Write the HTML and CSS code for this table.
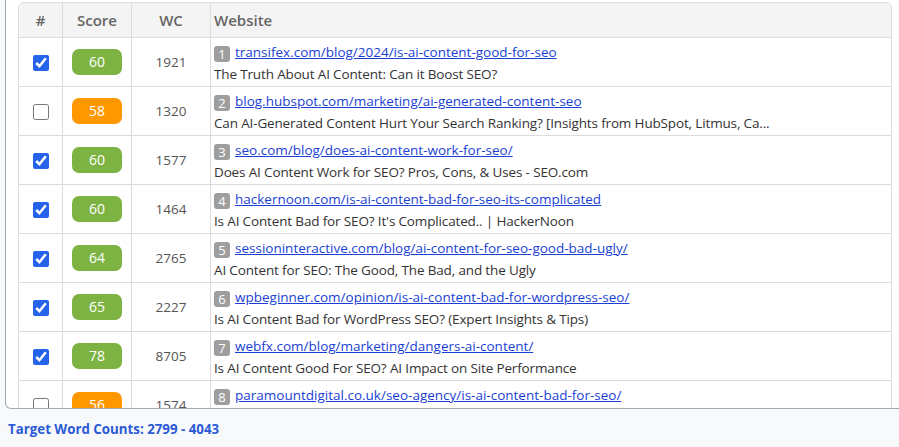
FILE: index.html
```html
<!DOCTYPE html>
<html>
<head>
<meta charset="utf-8">
<link rel="stylesheet" href="styles.css">
</head>
<body>
<div class="scroller">
  <div class="table-wrap">
    <table class="results">
      <thead>
        <tr>
          <th class="c-idx">#</th>
          <th class="c-score">Score</th>
          <th class="c-wc">WC</th>
          <th class="c-site">Website</th>
        </tr>
      </thead>
      <tbody>
        <tr>
          <td class="c-idx"><input type="checkbox" checked></td>
          <td class="c-score"><span class="score green">60</span></td>
          <td class="c-wc">1921</td>
          <td class="c-site"><div class="line link-line"><span class="num">1</span><a href="#">transifex.com/blog/2024/is-ai-content-good-for-seo</a></div><div class="line title">The Truth About AI Content: Can it Boost SEO?</div></td>
        </tr>
        <tr>
          <td class="c-idx"><input type="checkbox"></td>
          <td class="c-score"><span class="score orange">58</span></td>
          <td class="c-wc">1320</td>
          <td class="c-site"><div class="line link-line"><span class="num">2</span><a href="#">blog.hubspot.com/marketing/ai-generated-content-seo</a></div><div class="line title">Can AI-Generated Content Hurt Your Search Ranking? [Insights from HubSpot, Litmus, Ca...</div></td>
        </tr>
        <tr>
          <td class="c-idx"><input type="checkbox" checked></td>
          <td class="c-score"><span class="score green">60</span></td>
          <td class="c-wc">1577</td>
          <td class="c-site"><div class="line link-line"><span class="num">3</span><a href="#">seo.com/blog/does-ai-content-work-for-seo/</a></div><div class="line title">Does AI Content Work for SEO? Pros, Cons, &amp; Uses - SEO.com</div></td>
        </tr>
        <tr>
          <td class="c-idx"><input type="checkbox" checked></td>
          <td class="c-score"><span class="score green">60</span></td>
          <td class="c-wc">1464</td>
          <td class="c-site"><div class="line link-line"><span class="num">4</span><a href="#">hackernoon.com/is-ai-content-bad-for-seo-its-complicated</a></div><div class="line title">Is AI Content Bad for SEO? It's Complicated.. | HackerNoon</div></td>
        </tr>
        <tr>
          <td class="c-idx"><input type="checkbox" checked></td>
          <td class="c-score"><span class="score green">64</span></td>
          <td class="c-wc">2765</td>
          <td class="c-site"><div class="line link-line"><span class="num">5</span><a href="#">sessioninteractive.com/blog/ai-content-for-seo-good-bad-ugly/</a></div><div class="line title">AI Content for SEO: The Good, The Bad, and the Ugly</div></td>
        </tr>
        <tr>
          <td class="c-idx"><input type="checkbox" checked></td>
          <td class="c-score"><span class="score green">65</span></td>
          <td class="c-wc">2227</td>
          <td class="c-site"><div class="line link-line"><span class="num">6</span><a href="#">wpbeginner.com/opinion/is-ai-content-bad-for-wordpress-seo/</a></div><div class="line title">Is AI Content Bad for WordPress SEO? (Expert Insights &amp; Tips)</div></td>
        </tr>
        <tr>
          <td class="c-idx"><input type="checkbox" checked></td>
          <td class="c-score"><span class="score green">78</span></td>
          <td class="c-wc">8705</td>
          <td class="c-site"><div class="line link-line"><span class="num">7</span><a href="#">webfx.com/blog/marketing/dangers-ai-content/</a></div><div class="line title">Is AI Content Good For SEO? AI Impact on Site Performance</div></td>
        </tr>
        <tr>
          <td class="c-idx"><input type="checkbox"></td>
          <td class="c-score"><span class="score orange">56</span></td>
          <td class="c-wc">1574</td>
          <td class="c-site"><div class="line link-line"><span class="num">8</span><a href="#">paramountdigital.co.uk/seo-agency/is-ai-content-bad-for-seo/</a></div><div class="line title">Is AI Content Bad for SEO?</div></td>
        </tr>
      </tbody>
    </table>
  </div>
</div>
<div class="target">Target Word Counts: 2799 - 4043</div>
</body>
</html>
```

FILE: styles.css
```css
html { overflow: hidden; }
body {
  margin: 0;
  background: #f8f9fa;
  font-family: "Open Sans", "Segoe UI", sans-serif;
  font-size: 13.5px;
  color: #333;
}
.scroller {
  margin-left: 5px;
  width: 905px;
  height: 406px;
  overflow: hidden;
  background: #fff;
  border: 1px solid #a3a7ae;
  border-top: none;
  border-radius: 0 0 6px 6px;
  padding: 2px 0 0 12px;
  box-sizing: content-box;
}
.table-wrap {
  width: 872px;
  border: 1px solid #dcdcdc;
  border-radius: 6px 6px 0 0;
  overflow: hidden;
}
.results {
  width: 100%;
  border-collapse: collapse;
  table-layout: fixed;
}
.results th {
  background: #f4f4f4;
  color: #666;
  font-size: 15px;
  font-weight: 600;
  height: 34px;
  padding: 0 4px;
  text-align: center;
}
.results th.c-site { text-align: left; padding-left: 3px; }
.results td {
  border-top: 1px solid #dcdcdc;
  padding: 0 4px;
  text-align: center;
  vertical-align: middle;
}
.results th + th, .results td + td { border-left: 1px solid #dcdcdc; }
.c-idx { width: 35px; }
.c-score { width: 60px; }
.c-wc { width: 70px; color: #555; }
.results td.c-site { text-align: left; vertical-align: top; padding: 3px 4px 0 3px; }
.line {
  white-space: nowrap;
  overflow: hidden;
}
.link-line { height: 22px; line-height: 22px; }
.title { height: 23px; line-height: 23px; color: #333; letter-spacing: -0.15px; }
.line a { color: #1a3fd4; text-decoration: underline; }
.num {
  display: inline-block;
  width: 16px;
  height: 16px;
  line-height: 16px;
  border-radius: 3px;
  background: #9e9e9e;
  color: #fff;
  font-size: 13px;
  text-align: center;
  margin-right: 5px;
  vertical-align: -2px;
}
.results input[type=checkbox] {
  width: 16px;
  height: 16px;
  margin: 0;
  accent-color: #2563eb;
  vertical-align: middle;
}
.score {
  display: inline-block;
  width: 50px;
  height: 26px;
  line-height: 26px;
  border-radius: 7px;
  color: #fff;
  font-size: 14px;
}
.green { background: #7cb342; }
.orange { background: #ff9800; }
.target {
  padding: 11px 8px 0;
  color: #2b5bd7;
  font-weight: 700;
  font-size: 13.3px;
}
```
